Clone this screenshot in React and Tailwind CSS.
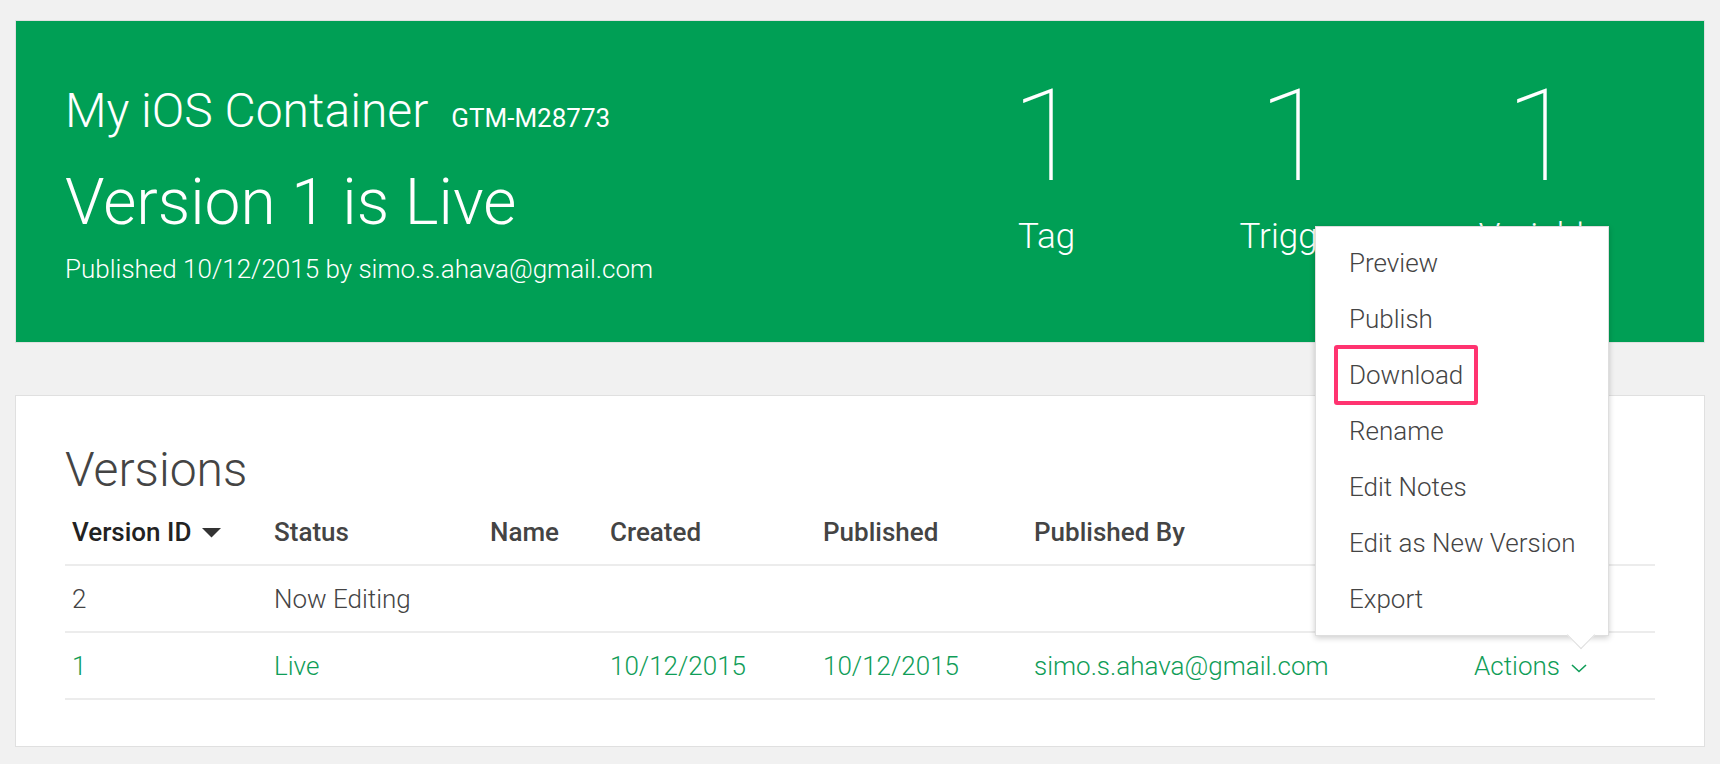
import React from 'react';

const menuItems = ['Preview', 'Publish', 'Download', 'Rename', 'Edit Notes', 'Edit as New Version', 'Export'];

function Stat({ value, label }) {
  return (
    <div className="w-[247px] flex flex-col items-center">
      <div className="text-[128px] font-thin leading-none">{value}</div>
      <div className="mt-[19px] text-[35px] font-light leading-none">{label}</div>
    </div>
  );
}

function Chevron() {
  return (
    <svg width="18" height="10" viewBox="0 0 18 10" className="ml-[10px] mt-[4px]">
      <polyline points="2,2 9,8.5 16,2" fill="none" stroke="currentColor" strokeWidth="1.6" />
    </svg>
  );
}

export default function App() {
  return (
    <div className="relative min-h-[764px] bg-[#f1f1f1] px-[15px] pt-[20px] font-['Roboto','Liberation_Sans',sans-serif]">
      {/* header card */}
      <section className="h-[323px] border border-[#e0e0e0] bg-[#009f55] text-white flex justify-between pl-[49px] pr-[40px]">
        <div className="pt-[66px]">
          <div className="flex items-baseline">
            <h1 className="text-[48px] font-light leading-none">My iOS Container</h1>
            <span className="ml-[23px] text-[26px] leading-none">GTM-M28773</span>
          </div>
          <h2 className="mt-[36px] text-[64px] font-light leading-none">Version 1 is Live</h2>
          <p className="mt-[21px] text-[26px] font-light leading-none">Published 10/12/2015 by simo.s.ahava@gmail.com</p>
        </div>
        <div className="flex pt-[51px]">
          <Stat value="1" label="Tag" />
          <Stat value="1" label="Trigger" />
          <Stat value="1" label="Variable" />
        </div>
      </section>

      {/* versions card */}
      <section className="mt-[52px] border border-[#e0e0e0] bg-white px-[49px] pt-[50px] pb-[46px]">
        <h2 className="text-[48px] font-light leading-none text-[#444]">Versions</h2>
        <div className="mt-[6px]">
          <div className="grid grid-cols-[202px_216px_120px_213px_211px_1fr] pl-[7px] h-[66px] items-center border-b-2 border-[#ececec] text-[26px] font-medium leading-none text-[#444]">
            <div className="flex items-center text-[#222]">
              Version ID
              <svg width="21" height="11" viewBox="0 0 21 11" className="ml-[10px]">
                <polygon points="1,1 20,1 10.5,10.5" fill="#333" />
              </svg>
            </div>
            <div>Status</div>
            <div>Name</div>
            <div>Created</div>
            <div>Published</div>
            <div>Published By</div>
          </div>
          <div className="grid grid-cols-[202px_216px_120px_213px_211px_1fr] pl-[7px] h-[67px] items-center border-b-2 border-[#ececec] text-[26px] font-light leading-none text-[#444]">
            <div>2</div>
            <div>Now Editing</div>
            <div></div>
            <div></div>
            <div></div>
            <div></div>
          </div>
          <div className="grid grid-cols-[202px_216px_120px_213px_211px_1fr] pl-[7px] h-[67px] items-center border-b-2 border-[#ececec] text-[26px] font-light leading-none text-[#0f9d58]">
            <div>1</div>
            <div>Live</div>
            <div></div>
            <div>10/12/2015</div>
            <div>10/12/2015</div>
            <div className="flex items-center justify-between pr-[67px]">
              <span>simo.s.ahava@gmail.com</span>
              <span className="flex items-center">
                Actions
                <Chevron />
              </span>
            </div>
          </div>
        </div>
      </section>

      {/* actions menu */}
      <div className="absolute left-[1315px] top-[226px] w-[294px] py-[8px] bg-white border border-[#dedede] shadow-[0_2px_6px_rgba(0,0,0,0.2)]">
        {menuItems.map((item) => (
          <div key={item} className="h-[56px] flex items-center pl-[33px] text-[26px] font-light leading-none text-[#444]">
            {item === 'Download' ? (
              <span className="-ml-[15px] h-[60px] flex items-center px-[11px] border-4 border-[#ff3370] rounded-[3px]">{item}</span>
            ) : (
              item
            )}
          </div>
        ))}
        <div className="absolute left-[255px] -bottom-[10px] w-[20px] h-[20px] rotate-45 bg-white border-r border-b border-[#dedede]" />
      </div>
    </div>
  );
}
